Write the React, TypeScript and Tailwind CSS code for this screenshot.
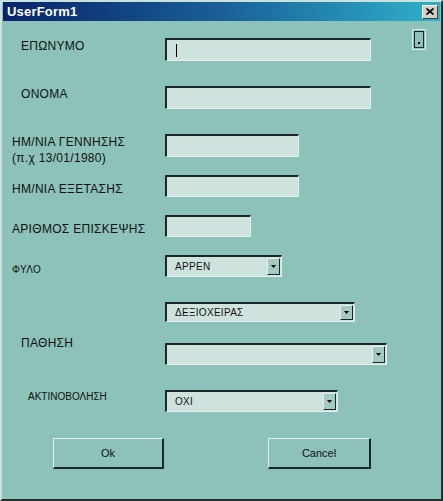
import React from "react";

const font = { fontFamily: '"Liberation Sans", Arial, sans-serif' };

// sunken text box, classic VBA UserForm look
const TextBox: React.FC<{ w: string; h?: string; caret?: boolean }> = ({ w, h = "h-[23px]", caret }) => (
  <div
    className={`${w} ${h} shrink-0 bg-[#cfe3de] border-t-2 border-l-2 border-b border-r border-t-[#1c2826] border-l-[#1c2826] border-b-[#e2f0ec] border-r-[#e2f0ec] flex items-center pl-[9px]`}
  >
    {caret && <div className="w-px h-[13px] bg-black" />}
  </div>
);

const ComboBox: React.FC<{ w: string; h?: string; value?: string }> = ({ w, h = "h-[22px]", value }) => (
  <div
    className={`${w} ${h} shrink-0 bg-[#cfe3de] border-t-2 border-l-2 border-b border-r border-t-[#1c2826] border-l-[#1c2826] border-b-[#e2f0ec] border-r-[#e2f0ec] flex items-stretch`}
  >
    <div className="flex-1 flex items-center pl-[8px] text-[10px] text-[#111]">{value}</div>
    <div className="w-[13px] my-[1px] mr-[1px] bg-[#a2c9c2] border border-t-[#e2f0ec] border-l-[#e2f0ec] border-b-[#1c2826] border-r-[#1c2826] flex items-center justify-center">
      <svg width="5" height="3" viewBox="0 0 5 3">
        <polygon points="0,0 5,0 2.5,3" fill="#000" />
      </svg>
    </div>
  </div>
);

const Button: React.FC<{ w: string; label: string }> = ({ w, label }) => (
  <div
    className={`${w} h-[31px] shrink-0 bg-[#8cc2b9] border-t border-l border-b-2 border-r-2 border-t-[#e2f0ec] border-l-[#e2f0ec] border-b-[#1c2826] border-r-[#1c2826] flex items-center justify-center text-[11px] text-[#111]`}
  >
    {label}
  </div>
);

const App: React.FC = () => {
  return (
    <div
      className="w-[443px] h-[501px] bg-[#8cc2b9] border-t-2 border-l-2 border-t-[#c9e2dd] border-l-[#c9e2dd] border-r-2 border-r-[#26302f] border-b-2 border-b-[#26302f] flex flex-col overflow-hidden"
      style={font}
    >
      {/* Title bar */}
      <div className="h-[19px] ml-px mr-px flex items-center justify-between bg-gradient-to-r from-[#0a236a] via-[#1a5f9a] to-[#31b1c9] pl-[4px] pr-[2px]">
        <span className="text-white font-bold text-[13px] tracking-[0.2px]">UserForm1</span>
        <div className="w-[16px] h-[14px] bg-[#d4d0c8] border border-t-white border-l-white border-b-[#404040] border-r-[#404040] flex items-center justify-center">
          <svg width="8" height="7" viewBox="0 0 8 7">
            <path d="M0.5 0.5 L7.5 6.5 M7.5 0.5 L0.5 6.5" stroke="#000" strokeWidth="1.6" />
          </svg>
        </div>
      </div>

      {/* Form body */}
      <div className="flex flex-col text-[12px] text-[#111] tracking-[0.3px]">
        {/* ΕΠΩΝΥΜΟ */}
        <div className="flex mt-[17px] h-[23px]">
          <div className="w-[163px] pl-[19px] pt-[1px] leading-[14px]">ΕΠΩΝΥΜΟ</div>
          <TextBox w="w-[206px]" caret />
          <div className="ml-[41px] -mt-[9px] w-[14px] h-[21px] border border-[#d6ebe6] bg-[#8cc2b9] p-px">
            <div className="w-full h-full border border-[#1c2826] flex items-end justify-center pb-[3px]">
              <div className="w-[2px] h-[2px] bg-black" />
            </div>
          </div>
        </div>

        {/* ΟΝΟΜΑ */}
        <div className="flex mt-[25px] h-[23px]">
          <div className="w-[163px] pl-[19px] pt-[1px] leading-[14px]">ΟΝΟΜΑ</div>
          <TextBox w="w-[206px]" />
        </div>

        {/* ΗΜ/ΝΙΑ ΓΕΝΝΗΣΗΣ */}
        <div className="flex mt-[25px] h-[23px]">
          <div className="w-[163px] pl-[10px] leading-[16px]">
            ΗΜ/ΝΙΑ ΓΕΝΝΗΣΗΣ
            <br />
            (π.χ 13/01/1980)
          </div>
          <TextBox w="w-[134px]" />
        </div>

        {/* ΗΜ/ΝΙΑ ΕΞΕΤΑΣΗΣ */}
        <div className="flex mt-[18px] h-[22px]">
          <div className="w-[163px] pl-[10px] pt-[7px] leading-[14px]">ΗΜ/ΝΙΑ ΕΞΕΤΑΣΗΣ</div>
          <TextBox w="w-[134px]" h="h-[22px]" />
        </div>

        {/* ΑΡΙΘΜΟΣ ΕΠΙΣΚΕΨΗΣ */}
        <div className="flex mt-[18px] h-[22px]">
          <div className="w-[163px] pl-[10px] pt-[7px] leading-[14px] whitespace-nowrap">ΑΡΙΘΜΟΣ ΕΠΙΣΚΕΨΗΣ</div>
          <TextBox w="w-[86px]" h="h-[22px]" />
        </div>

        {/* ΦΥΛΟ */}
        <div className="flex mt-[18px] h-[22px]">
          <div className="w-[163px] pl-[10px] pt-[9px] text-[10px] leading-[12px]">ΦΥΛΟ</div>
          <ComboBox w="w-[117px]" value="ΑΡΡΕΝ" />
        </div>

        {/* hand */}
        <div className="flex mt-[25px] h-[20px]">
          <div className="w-[163px]" />
          <ComboBox w="w-[190px]" h="h-[20px]" value="ΔΕΞΙΟΧΕΙΡΑΣ" />
        </div>

        {/* ΠΑΘΗΣΗ */}
        <div className="flex mt-[14px] h-[29px]">
          <div className="w-[163px] pl-[19px] leading-[14px]">ΠΑΘΗΣΗ</div>
          <div className="pt-[7px]">
            <ComboBox w="w-[222px]" />
          </div>
        </div>

        {/* ΑΚΤΙΝΟΒΟΛΗΣΗ */}
        <div className="flex mt-[25px] h-[22px]">
          <div className="w-[163px] pl-[26px] pt-[1px] text-[10px] leading-[12px] tracking-normal">ΑΚΤΙΝΟΒΟΛΗΣΗ</div>
          <ComboBox w="w-[173px]" value="ΟΧΙ" />
        </div>

        {/* Buttons */}
        <div className="flex mt-[26px] tracking-normal">
          <div className="w-[51px]" />
          <Button w="w-[111px]" label="Ok" />
          <div className="w-[104px]" />
          <Button w="w-[103px]" label="Cancel" />
        </div>
      </div>
    </div>
  );
};

export default App;
